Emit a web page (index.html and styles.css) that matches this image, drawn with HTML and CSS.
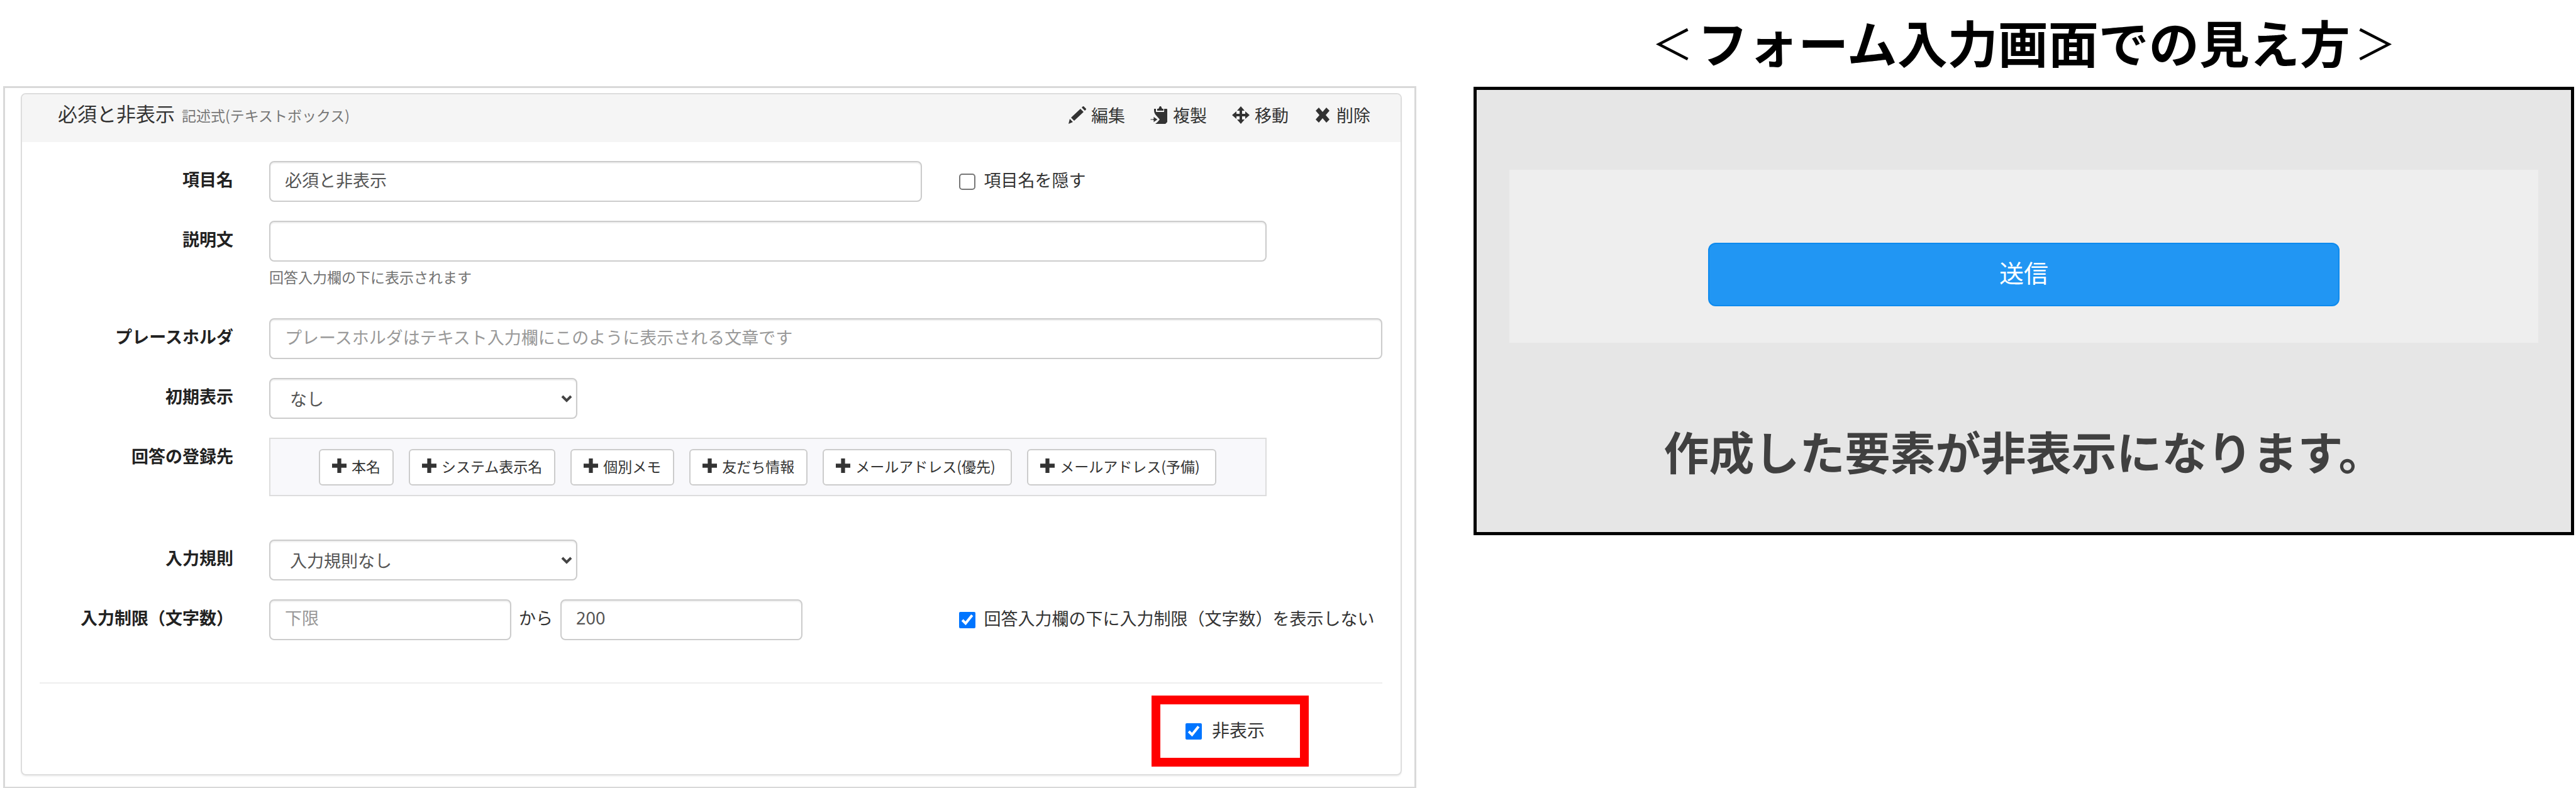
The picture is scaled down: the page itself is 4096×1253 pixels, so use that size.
FILE: index.html
```html
<!DOCTYPE html>
<html lang="ja">
<head>
    <meta charset="UTF-8">
    <meta name="viewport" content="width=device-width, initial-scale=1.0">
    <title>必須と非表示</title>
    <link rel="stylesheet" href="styles.css">
</head>
<body>
    <!-- Shared icons -->
    <svg class="icon-defs" aria-hidden="true">
        <symbol id="icon-plus" viewBox="0 0 22 22">
            <path d="M8 0h6v8h8v6h-8v8H8v-8H0V8h8z"/>
        </symbol>
        <symbol id="icon-chevron" viewBox="0 0 18 12">
            <path d="M2 2l7 7 7-7" fill="none" stroke="currentColor" stroke-width="4"/>
        </symbol>
    </svg>

    <!-- Form editor -->
    <main class="editor">
        <section class="panel">
            <header class="panel-header">
                <h2 class="panel-title">必須と非表示 <small>記述式(テキストボックス)</small></h2>
                <div class="tools">
                    <button type="button" class="tool">
                        <svg viewBox="0 0 28 28"><path d="M0 28l2-8 5 5zM4 18L19 4l5 5L9 23zM21 2l2-2h1l4 4v1l-2 2z"/></svg>編集
                    </button>
                    <button type="button" class="tool">
                        <svg viewBox="0 0 28 28"><path d="M6 4h3v5h13V4h4q1 0 1 1v20l-3 3H8q4-3 7-7l-7-8q-2-3-2-6zM11 7V4h2l2-4h2l2 4h2v3z"/><path d="M0 20h5v-4l7 5-7 5v-4H0z" stroke="#f5f5f5"/></svg>複製
                    </button>
                    <button type="button" class="tool">
                        <svg viewBox="0 0 28 28"><path d="M14 0l6 7h-4v5h5V8l7 6-7 6v-4h-5v5h4l-6 7-6-7h4v-5H7v4l-7-6 7-6v4h5V7H8z"/></svg>移動
                    </button>
                    <button type="button" class="tool">
                        <svg viewBox="0 0 28 28"><path d="M3 7l5-5 6 7 6-7 5 5-6 7 6 7-5 5-6-7-6 7-5-5 6-7z"/></svg>削除
                    </button>
                </div>
            </header>

            <form class="panel-body">
                <div class="row">
                    <label class="row-label" for="itemName">項目名</label>
                    <div class="field field-split">
                        <input class="control" type="text" id="itemName" value="必須と非表示">
                        <label class="check"><input type="checkbox">項目名を隠す</label>
                    </div>
                </div>

                <div class="row">
                    <label class="row-label" for="description">説明文</label>
                    <div class="field">
                        <input class="control control-long" type="text" id="description">
                        <p class="help">回答入力欄の下に表示されます</p>
                    </div>
                </div>

                <div class="row">
                    <label class="row-label" for="placeholder">プレースホルダ</label>
                    <div class="field">
                        <input class="control" type="text" id="placeholder" placeholder="プレースホルダはテキスト入力欄にこのように表示される文章です">
                    </div>
                </div>

                <div class="row">
                    <label class="row-label" for="initial">初期表示</label>
                    <div class="field">
                        <div class="select">
                            <select class="control" id="initial"><option>なし</option></select>
                            <svg><use href="#icon-chevron"/></svg>
                        </div>
                    </div>
                </div>

                <div class="row">
                    <span class="row-label">回答の登録先</span>
                    <div class="field">
                        <div class="targets">
                            <button type="button" class="add"><svg><use href="#icon-plus"/></svg>本名</button>
                            <button type="button" class="add"><svg><use href="#icon-plus"/></svg>システム表示名</button>
                            <button type="button" class="add"><svg><use href="#icon-plus"/></svg>個別メモ</button>
                            <button type="button" class="add"><svg><use href="#icon-plus"/></svg>友だち情報</button>
                            <button type="button" class="add add-mail"><svg><use href="#icon-plus"/></svg>メールアドレス(優先)</button>
                            <button type="button" class="add add-mail"><svg><use href="#icon-plus"/></svg>メールアドレス(予備)</button>
                        </div>
                    </div>
                </div>

                <div class="row">
                    <label class="row-label" for="rule">入力規則</label>
                    <div class="field">
                        <div class="select">
                            <select class="control" id="rule"><option>入力規則なし</option></select>
                            <svg><use href="#icon-chevron"/></svg>
                        </div>
                    </div>
                </div>

                <div class="row">
                    <label class="row-label" for="minLength">入力制限（文字数）</label>
                    <div class="field field-split">
                        <div class="range">
                            <input class="control" type="text" id="minLength" placeholder="下限">
                            <label for="maxLength">から</label>
                            <input class="control" type="text" id="maxLength" value="200">
                        </div>
                        <label class="check"><input type="checkbox" checked>回答入力欄の下に入力制限（文字数）を表示しない</label>
                    </div>
                </div>

                <hr>

                <div class="panel-footer">
                    <label class="check highlight"><input type="checkbox" checked>非表示</label>
                </div>
            </form>
        </section>
    </main>

    <!-- How the form looks to the person answering -->
    <aside class="preview">
        <h1><span>＜</span>フォーム入力画面での見え方<span>＞</span></h1>
        <div class="preview-frame">
            <div class="preview-card">
                <button type="button" class="submit">送信</button>
            </div>
            <p class="preview-note">作成した要素が非表示になります。</p>
        </div>
    </aside>
</body>
</html>
```
FILE: styles.css
```css
/* Global Styling */
* {
    box-sizing: border-box;
}

body {
    display: grid;
    grid-template-columns: 2247fr 1750fr;
    align-items: start;
    gap: 91px;
    margin: 0;
    padding: 0 3px 0 5px;
    background-color: #fff;
    color: #333;
    font-family: "Noto Sans CJK JP", sans-serif;
    font-size: 27px;
}

h1, h2, p {
    margin: 0;
}

button, input, select {
    margin: 0;
    color: inherit;
    font: inherit;
}

svg {
    fill: currentColor;
}

.icon-defs {
    display: none;
}

/* Editor Panel */
.editor {
    min-width: 0;
    margin-top: 137px;
    padding: 8px 20px 18px 25px;
    border: 3px solid #d9d9d9;
}

.panel {
    border: 2px solid #ddd;
    border-radius: 8px;
    box-shadow: 0 2px 2px rgba(0, 0, 0, 0.05);
}

.panel-header {
    display: flex;
    justify-content: space-between;
    align-items: flex-start;
    height: 76px;
    padding: 10px 48px 0 57px;
    border-radius: 6px 6px 0 0;
    background-color: #f5f5f5;
    line-height: 40px;
}

.panel-title {
    font-size: 31px;
    font-weight: normal;
}

.panel-title small {
    margin-left: 4px;
    color: #777;
    font-size: 23px;
    line-height: 1;
}

.tools {
    display: flex;
    gap: 40px;
    margin-top: 3px;
}

.tool {
    display: flex;
    align-items: center;
    gap: 8px;
    padding: 0;
    border: 0;
    background: none;
    cursor: pointer;
}

.tool svg {
    width: 28px;
    height: 28px;
}

.panel-body {
    padding: 30px 29px 12px 28px;
}

/* Form Rows */
.row {
    display: grid;
    grid-template-columns: 308px 1fr;
    gap: 57px;
    margin-bottom: 30px;
}

.row-label {
    color: #222;
    font-weight: bold;
    line-height: 58px;
    text-align: right;
}

.field {
    min-width: 0;
}

.field-split {
    display: grid;
    grid-template-columns: 1037fr 673fr;
    gap: 59px;
}

.control {
    display: block;
    width: 100%;
    height: 65px;
    padding: 0 23px 6px;
    border: 2px solid #ccc;
    border-radius: 8px;
    background-color: #fff;
    box-shadow: inset 0 2px 2px rgba(0, 0, 0, 0.07);
    color: #555;
}

.control::placeholder {
    color: #999;
    opacity: 1;
}

.control-long {
    width: 89.6%;
}

.help {
    margin: 9px 0 20px;
    color: #737373;
    font-size: 23px;
    line-height: 31px;
}

.select {
    position: relative;
    width: 490px;
}

.select .control {
    padding: 0 31px;
    appearance: none;
}

/* Arrow lies over the select */
.select svg {
    position: absolute;
    top: 27px;
    right: 8px;
    width: 18px;
    height: 12px;
    color: #444;
    pointer-events: none;
}

.range {
    display: flex;
    line-height: 58px;
}

.range .control {
    width: 385px;
    font-family: "Noto Sans", "Noto Sans CJK JP", sans-serif;
}

.range label {
    margin: 0 12px;
}

.check {
    display: flex;
    align-items: center;
    gap: 14px;
    height: 60px;
    line-height: 60px;
    white-space: nowrap;
}

.check input {
    width: 26px;
    height: 26px;
    margin-top: 6px;
    accent-color: #0075ff;
}

.check input:not(:checked) {
    border: 2px solid #767676;
    border-radius: 5px;
    background-color: #fff;
    appearance: none;
}

/* Answer Targets */
.targets {
    display: flex;
    gap: 24px;
    width: 89.6%;
    margin-bottom: 39px;
    padding: 16px 0 15px 77px;
    border: 2px solid #ddd;
    background-color: #f8f8fb;
}

.add {
    display: flex;
    align-items: center;
    gap: 8px;
    height: 58px;
    padding: 0 19px 5px;
    border: 2px solid #ccc;
    border-radius: 6px;
    background-color: #fff;
    font-size: 23px;
    white-space: nowrap;
    cursor: pointer;
}

.add-mail {
    min-width: 301px;
}

.add svg {
    width: 23px;
    height: 23px;
}

/* Panel Footer */
hr {
    height: 2px;
    margin: 67px 0 19px;
    border: 0;
    background-color: #eee;
}

.panel-footer {
    display: flex;
    justify-content: flex-end;
    padding-right: 117px;
}

.highlight {
    gap: 16px;
    width: 250px;
    height: 113px;
    padding: 0 40px 5px;
    border: 14px solid #f00;
    font-size: 28px;
}

/* Preview */
.preview {
    min-width: 0;
    text-align: center;
}

.preview h1 {
    height: 131px;
    margin-bottom: 7px;
    color: #000;
    font-size: 80px;
    line-height: 131px;
    white-space: nowrap;
}

.preview h1 span {
    display: inline-block;
    width: 80px;
    font-size: 66px;
    font-weight: normal;
    line-height: 1;
    vertical-align: 5px;
}

.preview-frame {
    padding: 127px 52px 85px;
    border: 5px solid #000;
    background-color: #e6e6e6;
}

.preview-card {
    padding: 116px 0 58px;
    background-color: #eee;
}

.submit {
    display: block;
    width: 61.4%;
    height: 101px;
    margin: 0 auto;
    padding: 0 0 9px;
    border: 2px solid #0d8aee;
    border-radius: 12px;
    background-color: #2196f3;
    color: #fff;
    font-size: 39px;
    cursor: pointer;
}

.preview-note {
    margin-top: 126px;
    color: #404040;
    font-size: 72px;
    font-weight: bold;
    line-height: 90px;
}
```
